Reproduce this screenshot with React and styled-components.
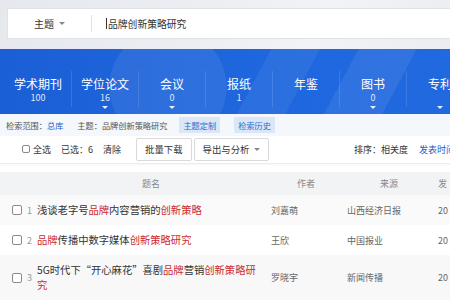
import { Fragment } from 'react';
import styled, { createGlobalStyle } from 'styled-components';

const GlobalStyle = createGlobalStyle`
  body {
    margin: 0;
    width: 450px;
    height: 300px;
    overflow: hidden;
    background: #ffffff;
    font-family: 'Noto Sans CJK SC', 'Noto Sans', sans-serif;
  }
`;

const Page = styled.div`
  width: 450px;
  height: 300px;
  overflow: hidden;
  display: flex;
  flex-direction: column;
`;

const SearchArea = styled.div`
  height: 50px;
  box-sizing: border-box;
  padding: 8px 0 0 7px;
  background: linear-gradient(115deg, #e5e8ed 0%, #eceef2 45%, #f2f3f6 70%, #ebedf1 100%);
`;

const SearchBox = styled.div`
  height: 31px;
  box-sizing: border-box;
  background: #fff;
  border: 1px solid #dfe2e7;
  border-right: none;
  display: flex;
  align-items: center;
`;

const FieldSelect = styled.div`
  width: 83px;
  display: flex;
  justify-content: center;
  align-items: center;
  gap: 5px;
  font-size: 10px;
  color: #333;
`;

const Caret = styled.span`
  display: inline-block;
  width: 0;
  height: 0;
  border-left: ${p => p.$size || 3}px solid transparent;
  border-right: ${p => p.$size || 3}px solid transparent;
  border-top: ${p => p.$size || 3}px solid ${p => p.$color || '#777'};
`;

const VDivider = styled.div`
  width: 1px;
  height: 17px;
  background: #e2e2e2;
`;

const SearchInput = styled.div`
  padding-left: 14px;
  font-size: 9.8px;
  color: #333;
  display: flex;
  align-items: center;
`;

const Cursor = styled.span`
  width: 1px;
  height: 11px;
  background: #333;
  margin-right: 1px;
`;

const Band = styled.div`
  height: 66px;
  box-sizing: border-box;
  padding-left: 5px;
  display: flex;
  overflow: hidden;
  background:
    radial-gradient(circle at 168px 38px, rgba(255, 255, 255, 0.07) 0 58px, transparent 59px),
    linear-gradient(118deg, transparent 0 56%, rgba(255, 255, 255, 0.06) 56% 66%, transparent 66% 74%, rgba(255, 255, 255, 0.07) 74% 86%, transparent 86%),
    linear-gradient(90deg, #1b5fd6, #1f67de 60%, #2169df);
`;

const Tab = styled.div`
  flex: 0 0 66px;
  display: flex;
  flex-direction: column;
  align-items: center;
  padding-top: 28px;
  color: #fff;
`;

const TabLabel = styled.div`
  font-size: 12px;
  line-height: 14px;
  white-space: nowrap;
`;

const TabCount = styled.div`
  font-size: 9px;
  line-height: 11px;
  height: 11px;
  margin-top: 1px;
  color: rgba(255, 255, 255, 0.88);
`;

const TabCaret = styled.div`
  margin-top: 3px;
  height: 3px;
  display: flex;
`;

const TabSep = styled.div`
  flex: 0 0 1px;
  height: 36px;
  margin-top: 22px;
  background: rgba(255, 255, 255, 0.12);
`;

const FilterLine = styled.div`
  height: 22px;
  box-sizing: border-box;
  padding-left: 6px;
  display: flex;
  align-items: center;
  background: #f4f7fb;
  font-size: 8.2px;
  color: #555;
  white-space: nowrap;
`;

const FilterItem = styled.span`
  margin-right: ${p => p.$gap || 14}px;
`;

const Strong = styled.span`
  color: #1d5cc7;
`;

const Tag = styled.span`
  background: #dbe6f7;
  color: #2d6ccc;
  padding: 2px 4px;
  margin-right: 14px;
`;

const Toolbar = styled.div`
  height: 29px;
  box-sizing: border-box;
  padding-left: 22px;
  display: flex;
  align-items: center;
  background: #fff;
  border-bottom: 1px solid #ececec;
  box-shadow: 0 1px 2px rgba(0, 0, 0, 0.04);
  font-size: 9px;
  color: #333;
  white-space: nowrap;
`;

const Check = styled.span`
  display: inline-block;
  box-sizing: border-box;
  width: ${p => p.$size}px;
  height: ${p => p.$size}px;
  border: 1px solid #8a8a8a;
  border-radius: 2px;
  background: #fff;
  flex-shrink: 0;
`;

const ToolText = styled.span`
  margin-left: ${p => p.$ml || 0}px;
`;

const Btn = styled.div`
  height: 23px;
  box-sizing: border-box;
  margin-left: ${p => p.$ml || 0}px;
  padding: 0 ${p => p.$px || 8}px;
  border: 1px solid #dadada;
  border-radius: 2px;
  background: #fff;
  display: flex;
  align-items: center;
  gap: 5px;
  font-size: 9.4px;
  color: #333;
`;

const Spacer = styled.div`
  flex: 1;
`;

const SortLabel = styled.span`
  color: #333;
  margin-right: 11px;
`;

const SortLink = styled.span`
  color: #1d5cc7;
  flex-shrink: 0;
  margin-right: -5px;
`;

const Table = styled.div`
  margin-top: 8px;
  font-size: 9px;
`;

const Row = styled.div`
  display: grid;
  grid-template-columns: 37px 228px 80px 93px 1fr;
  align-items: center;
  background: ${p => p.$bg || '#fff'};
  min-height: ${p => p.$h || 30}px;
  white-space: nowrap;
`;

const HeadCell = styled.div`
  color: #888;
  text-align: ${p => p.$center ? 'center' : 'left'};
  padding-left: ${p => p.$pl || 0}px;
`;

const IndexCell = styled.div`
  display: flex;
  align-items: center;
  padding-left: 12px;
  gap: 5px;
  color: #999;
  font-size: 9px;
`;

const TitleCell = styled.div`
  font-size: 10.3px;
  line-height: 15px;
  color: #333;
  white-space: normal;
  padding: 7px 6px 8px 0;
`;

const Hl = styled.span`
  color: #cc2b2f;
`;

const Cell = styled.div`
  color: #666;
  padding-left: ${p => p.$pl || 0}px;
`;

const tabs = [
  { label: '学术期刊', count: '100' },
  { label: '学位论文', count: '16', caret: true },
  { label: '会议', count: '0', caret: true },
  { label: '报纸', count: '1' },
  { label: '年鉴' },
  { label: '图书', count: '0', caret: true },
  { label: '专利', caret: true },
];

const rows = [
  {
    n: 1,
    title: [['浅谈老字号'], ['品牌', 1], ['内容营销的'], ['创新策略', 1]],
    author: '刘嘉萌',
    source: '山西经济日报',
    bg: '#fafafa',
  },
  {
    n: 2,
    title: [['品牌', 1], ['传播中数字媒体'], ['创新策略研究', 1]],
    author: '王欣',
    source: '中国报业',
  },
  {
    n: 3,
    title: [['5G时代下“开心麻花”喜剧'], ['品牌', 1], ['营销'], ['创新策略研究', 1]],
    author: '罗晓宇',
    source: '新闻传播',
    bg: '#f8f8f8',
  },
];

export default function App() {
  return (
    <Page>
      <GlobalStyle />
      <SearchArea>
        <SearchBox>
          <FieldSelect>
            主题 <Caret $size={3} $color="#888" />
          </FieldSelect>
          <VDivider />
          <SearchInput>
            <Cursor />
            品牌创新策略研究
          </SearchInput>
        </SearchBox>
      </SearchArea>

      <Band>
        {tabs.map((t, i) => (
          <Fragment key={t.label}>
            {i > 0 && <TabSep />}
            <Tab>
              <TabLabel>{t.label}</TabLabel>
              <TabCount>{t.count || ''}</TabCount>
              <TabCaret>{t.caret && <Caret $size={3} $color="rgba(255,255,255,0.9)" />}</TabCaret>
            </Tab>
          </Fragment>
        ))}
      </Band>

      <FilterLine>
        <FilterItem>检索范围：<Strong>总库</Strong></FilterItem>
        <FilterItem $gap={12}>主题：品牌创新策略研究</FilterItem>
        <Tag>主题定制</Tag>
        <Tag>检索历史</Tag>
      </FilterLine>

      <Toolbar>
        <Check $size={8} />
        <ToolText $ml={3}>全选</ToolText>
        <ToolText $ml={10}>已选：6</ToolText>
        <ToolText $ml={10}>清除</ToolText>
        <Btn $ml={15}>批量下载</Btn>
        <Btn $ml={2}>导出与分析 <Caret $size={3} $color="#888" /></Btn>
        <Spacer />
        <SortLabel>排序：相关度</SortLabel>
        <SortLink>发表时间</SortLink>
      </Toolbar>

      <Table>
        <Row $bg="#f2f3f5" $h={23}>
          <div />
          <HeadCell $center>题名</HeadCell>
          <HeadCell $pl={32}>作者</HeadCell>
          <HeadCell $pl={35}>来源</HeadCell>
          <HeadCell>发</HeadCell>
        </Row>
        {rows.map(r => (
          <Row key={r.n} $bg={r.bg}>
            <IndexCell>
              <Check $size={10} />
              {r.n}
            </IndexCell>
            <TitleCell>
              {r.title.map(([text, hl], i) => (hl ? <Hl key={i}>{text}</Hl> : <span key={i}>{text}</span>))}
            </TitleCell>
            <Cell $pl={6}>{r.author}</Cell>
            <Cell $pl={2}>{r.source}</Cell>
            <Cell>20</Cell>
          </Row>
        ))}
      </Table>
    </Page>
  );
}
